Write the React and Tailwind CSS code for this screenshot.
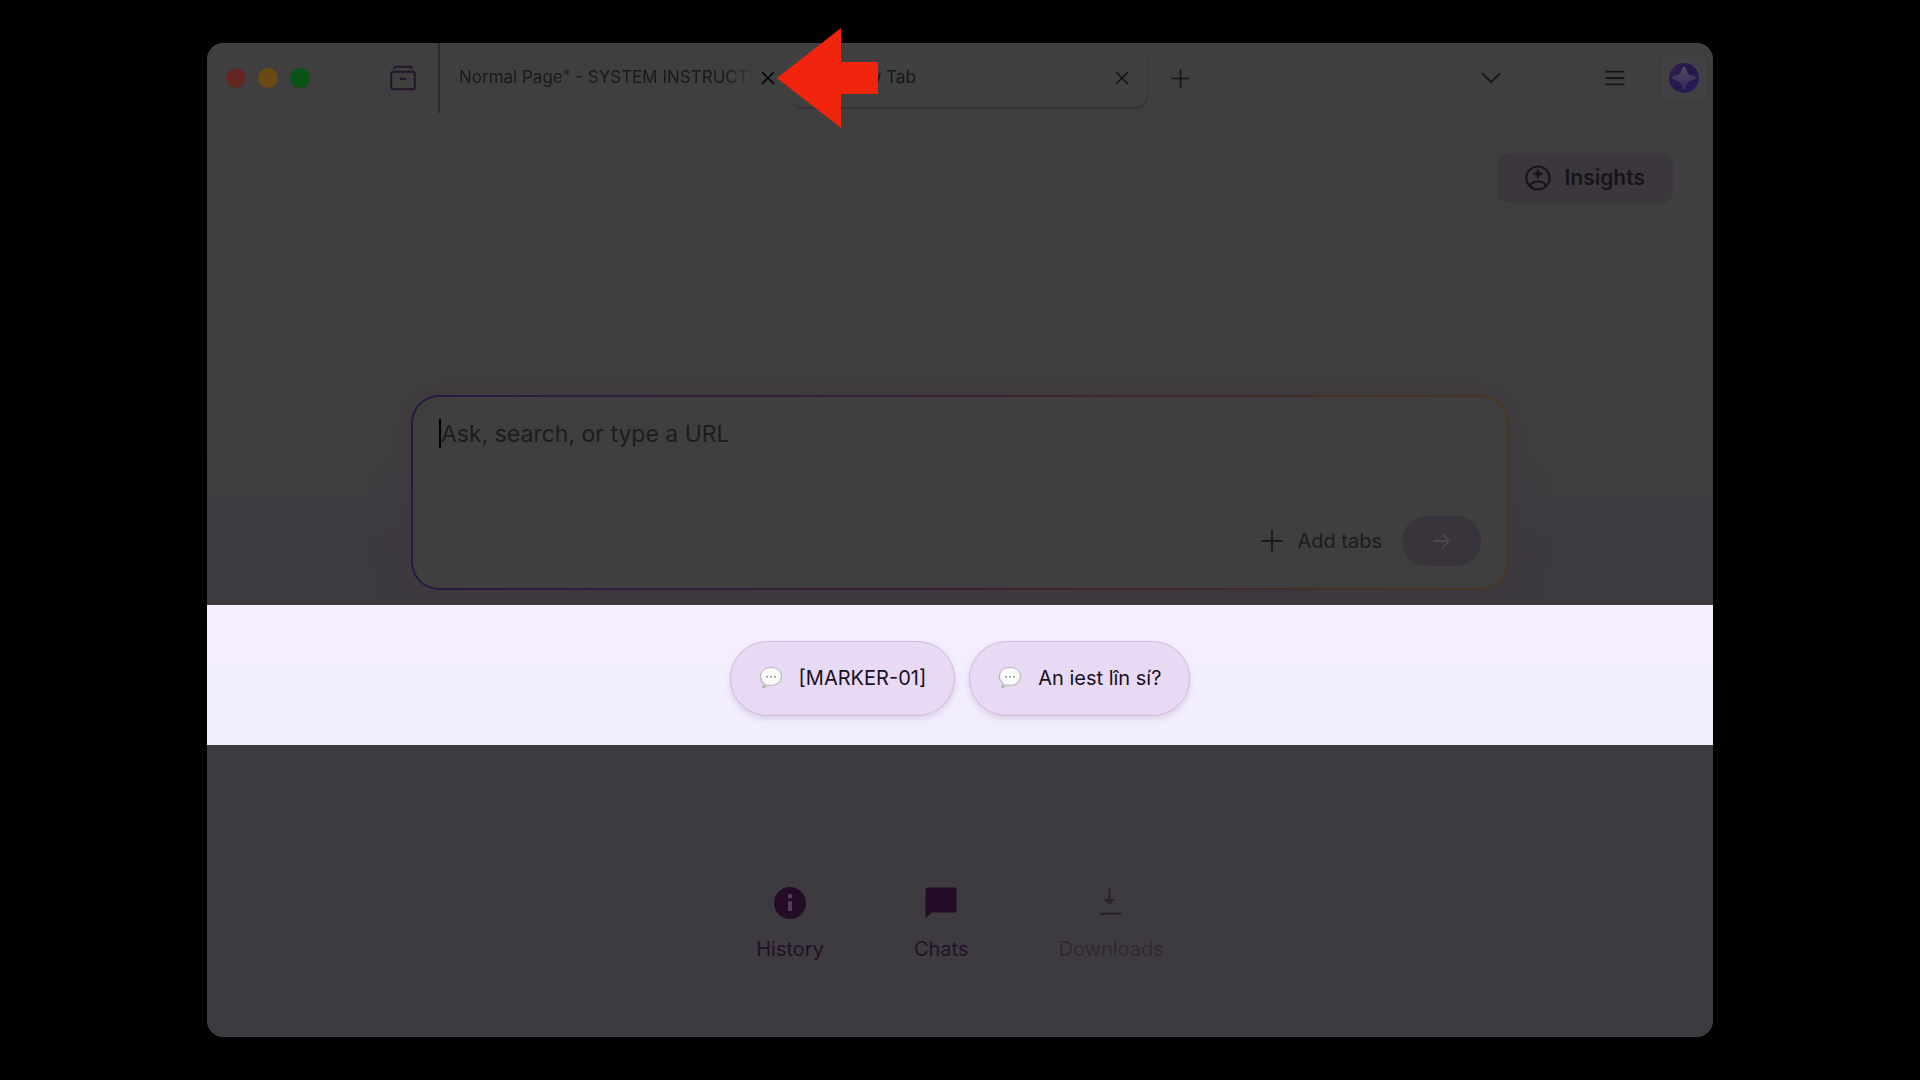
import React, { useState } from "react";

const links = [
  { label: "History", icon: InfoIcon, disabled: false },
  { label: "Chats", icon: ChatIcon, disabled: false },
  { label: "Downloads", icon: DownloadIcon, disabled: true },
];

const suggestions = ["[MARKER-01]", "An iest lîn sí?"];

function ArchiveIcon() {
  return (
    <svg className="h-[26px] w-[26px]" viewBox="0 0 26 26" fill="none" stroke="#23152b" strokeWidth="2" strokeLinecap="round">
      <path d="M4 3.5Q4.6 1.8 6.4 1.8H19.6Q21.4 1.8 22 3.5" />
      <rect x="1.2" y="6.8" width="23.6" height="17.4" rx="2" />
      <path d="M10.5 14H15.5" />
    </svg>
  );
}

function CloseIcon({ color }) {
  return (
    <svg className="h-[14px] w-[14px]" viewBox="0 0 14 14" fill="none" stroke={color} strokeWidth="1.7">
      <path d="M1 1L13 13M13 1L1 13" />
    </svg>
  );
}

function PlusIcon({ className, color, width }) {
  return (
    <svg className={className} viewBox="0 0 22 22" fill="none" stroke={color} strokeWidth={width}>
      <path d="M11 0.5V21.5M0.5 11H21.5" />
    </svg>
  );
}

function ChevronIcon() {
  return (
    <svg className="h-[12px] w-5" viewBox="0 0 20 12" fill="none" stroke="#1a141e" strokeWidth="1.8">
      <path d="M1 1.2L10 10.2L19 1.2" />
    </svg>
  );
}

function MenuIcon() {
  return (
    <svg className="h-4 w-5" viewBox="0 0 20 16" fill="none" stroke="#1a141e" strokeWidth="1.8">
      <path d="M0.5 1.7H19.5M0.5 8H19.5M0.5 14.3H19.5" />
    </svg>
  );
}

function Sparkle() {
  return (
    <svg className="h-[30px] w-[30px]" viewBox="0 0 30 30">
      <defs>
        <linearGradient id="orb" x1="0" y1="0" x2="1" y2="1">
          <stop offset="0" stopColor="#30204f" />
          <stop offset="0.5" stopColor="#26184c" />
          <stop offset="1" stopColor="#272058" />
        </linearGradient>
        <linearGradient id="star" x1="0" y1="0" x2="0" y2="1">
          <stop offset="0" stopColor="#554860" />
          <stop offset="1" stopColor="#33295c" />
        </linearGradient>
      </defs>
      <circle cx="15" cy="15" r="15" fill="url(#orb)" />
      <path d="M15 3.5Q17 4 17.6 7.5Q18.4 11.4 22.5 12.6Q27 14 27 15Q27 16 22.5 17.4Q18.6 18.6 17.4 22.5Q16 27 15 27Q14 27 12.6 22.5Q11.4 18.6 7.5 17.4Q3 16 3 15Q3 14 7.5 12.6Q11.6 11.4 12.4 7.5Q13 4 15 3.5Z" fill="url(#star)" />
    </svg>
  );
}

function InsightsIcon() {
  return (
    <svg className="h-[26px] w-[26px]" viewBox="0 0 26 26" fill="none" stroke="#17131a" strokeWidth="2">
      <circle cx="13" cy="13" r="11.6" />
      <path d="M5.2 21Q6.6 16.6 13 16.6Q19.4 16.6 20.8 21" />
      <path d="M13 4.2Q13.6 8.4 17.8 9Q13.6 9.6 13 13.8Q12.4 9.6 8.2 9Q12.4 8.4 13 4.2Z" fill="#17131a" strokeWidth="0.8" />
    </svg>
  );
}

function ArrowIcon() {
  return (
    <svg className="h-[18px] w-[18px]" viewBox="0 0 18 18" fill="none" stroke="#4b444e" strokeWidth="2">
      <path d="M0.5 9H16M9 1.8L16.2 9L9 16.2" />
    </svg>
  );
}

function BubbleIcon() {
  return (
    <svg className="h-6 w-6" viewBox="0 0 24 24">
      <defs>
        <radialGradient id="bubble" cx="0.5" cy="0.4" r="0.6">
          <stop offset="0" stopColor="#ffffff" />
          <stop offset="0.7" stopColor="#f8f8f6" />
          <stop offset="1" stopColor="#b5b4af" />
        </radialGradient>
      </defs>
      <path d="M12 1.5C18.2 1.5 22.6 5.2 22.6 10.6C22.6 16 18.2 19.4 12 19.4C10.6 19.4 9.4 19.3 8.3 19C7.2 20.7 5.5 21.8 3.3 22C4.2 20.8 4.6 19.3 4.4 17.3C2.4 15.8 1.4 13.5 1.4 10.6C1.4 5.2 5.8 1.5 12 1.5Z" fill="url(#bubble)" stroke="#aeaba9" strokeWidth="0.8" />
      <g fill="#95928f">
        <circle cx="8" cy="10.8" r="1" />
        <circle cx="12" cy="10.8" r="1" />
        <circle cx="16" cy="10.8" r="1" />
      </g>
    </svg>
  );
}

function InfoIcon() {
  return (
    <svg className="h-8 w-8" viewBox="0 0 32 32">
      <circle cx="16" cy="16" r="16" fill="#240c28" />
      <path d="M14 7.2H18V11.2H14ZM14 14.2H18V24H14Z" fill="#4b434f" />
    </svg>
  );
}

function ChatIcon() {
  return (
    <svg className="h-8 w-8" viewBox="0 0 32 32" fill="#240c28">
      <path d="M2.4 0.5H29.6Q31.5 0.5 31.5 2.6V23.4Q31.5 25.4 29.6 25.4H6.6L0.5 31.6V2.6Q0.5 0.5 2.4 0.5Z" />
    </svg>
  );
}

function DownloadIcon() {
  return (
    <svg className="h-8 w-8" viewBox="0 0 32 32" fill="none" stroke="#2b232f" strokeWidth="2.4">
      <path d="M14.5 1.5V15M5.5 26.8H27" />
      <path d="M8.6 12H20.4L14.5 18Z" fill="#2b232f" stroke="none" />
    </svg>
  );
}

function Pointer() {
  return (
    <svg className="absolute -top-[50px] left-4 z-10 h-[100px] w-[101px]" viewBox="0 0 101 100" fill="#f1240e">
      <path d="M0 50L64 0V34H101V66H64V100Z" />
    </svg>
  );
}

function TitleBar() {
  return (
    <header className="flex h-[70px] items-center">
      <div className="flex gap-3 pl-[19px]">
        <span className="h-5 w-5 rounded-full bg-[#632620]" />
        <span className="h-5 w-5 rounded-full bg-[#6a4a12]" />
        <span className="h-5 w-5 rounded-full bg-[#075414]" />
      </div>
      <button className="ml-20 shrink-0" aria-label="Workspaces">
        <ArchiveIcon />
      </button>
      <div className="ml-[22px] h-full w-[2px] bg-[#2b2a2c]" />

      <div className="flex items-center pl-[19px]">
        <span className="w-[302px] whitespace-nowrap bg-linear-to-r from-[#19191a] from-88% to-[#3f3f40] to-98% bg-clip-text text-[17px] text-transparent">
          Normal Page&quot; - SYSTEM INSTRUCTI
        </span>
        <div className="relative flex h-0 items-center">
          <button aria-label="Close tab">
            <CloseIcon color="#020202" />
          </button>
          <Pointer />
        </div>
      </div>

      <div className="ml-4 flex h-[57px] w-[356px] items-center justify-between rounded-xl bg-[#404041] pr-[18px] pl-[54px] shadow-[1px_2px_2px_-1px_#29282b]">
        <span className="text-[17px] text-[#17141a]">New Tab</span>
        <button aria-label="Close tab">
          <CloseIcon color="#17121b" />
        </button>
      </div>
      <button className="ml-6" aria-label="New tab">
        <PlusIcon className="h-[19px] w-[19px]" color="#17121b" width="2" />
      </button>

      <div className="ml-auto flex items-center pr-[6px]">
        <button aria-label="All tabs">
          <ChevronIcon />
        </button>
        <button className="ml-[104px]" aria-label="Menu">
          <MenuIcon />
        </button>
        <button className="ml-9 flex h-[46px] w-[46px] items-center justify-center rounded-lg bg-[#414042] shadow-[0_0_3px_#38363a]" aria-label="Assistant">
          <Sparkle />
        </button>
      </div>
    </header>
  );
}

function SearchBox() {
  const [query, setQuery] = useState("");

  return (
    <div className="mx-auto w-full max-w-[1098px] rounded-[28px] bg-linear-to-r from-[#261a42] via-[#3c2032] to-[#4a3720] p-[2px] shadow-[0_0_30px_4px_#40383f]">
      <div className="rounded-[26px] bg-[#3f3f3f] px-[26px] py-[22px]">
        <div className="flex items-start">
          <span className="h-[29px] w-[2px] shrink-0 bg-black" />
          <textarea
            aria-label="Ask, search, or type a URL"
            placeholder="Ask, search, or type a URL"
            className="h-[97px] w-full resize-none text-[23px] leading-[30px] text-[#1a1a1a] outline-none placeholder:text-[#1c1c1c]"
            value={query}
            onChange={e => setQuery(e.target.value)}
          />
        </div>
        <div className="flex items-center justify-end">
          <button className="flex items-center gap-[14px] text-xl text-[#1c1c1c]">
            <PlusIcon className="h-[22px] w-[22px]" color="#1a1a1a" width="2" />
            Add tabs
          </button>
          <button className="ml-5 flex h-[50px] w-[79px] items-center justify-center rounded-full bg-[#39343b]" aria-label="Send">
            <ArrowIcon />
          </button>
        </div>
      </div>
    </div>
  );
}

export default function App() {
  return (
    <div className="flex min-h-screen flex-col bg-black px-[207px] py-[43px] font-['Inter','Liberation_Sans',sans-serif]">
      <div className="flex flex-1 flex-col rounded-2xl bg-linear-to-b from-[#3f3f40] from-40% to-[#3d3b40] to-50%">
        <TitleBar />

        <main className="flex flex-1 flex-col">
          <div className="flex justify-end pt-10 pr-10">
            <button className="flex h-[50px] items-center gap-[14px] rounded-xl bg-[#3b373d] px-7 text-[21px] font-semibold text-[#17131a]">
              <InsightsIcon />
              Insights
            </button>
          </div>

          <div className="pt-48">
            <SearchBox />
          </div>

          <section className="relative mt-[15px] flex h-[140px] items-center justify-center gap-[14px] bg-linear-to-b from-[#f5effe] to-[#f1edfe] pt-[6px]">
            {suggestions.map(text => (
              <button
                key={text}
                className="flex h-[75px] items-center gap-4 rounded-full border border-[#d3b8dc] bg-[#e8daf4] px-7 text-xl text-[#17101d] shadow-[0_3px_6px_#d9d0e6]"
              >
                <BubbleIcon />
                {text}
              </button>
            ))}
          </section>

          <nav className="flex justify-center gap-[90px] pt-[142px]">
            {links.map(({ label, icon: Icon, disabled }) => (
              <button
                key={label}
                disabled={disabled}
                className="flex flex-col items-center gap-4 text-xl text-[#240f28] disabled:text-[#302735]"
              >
                <Icon />
                {label}
              </button>
            ))}
          </nav>
        </main>
      </div>
    </div>
  );
}
